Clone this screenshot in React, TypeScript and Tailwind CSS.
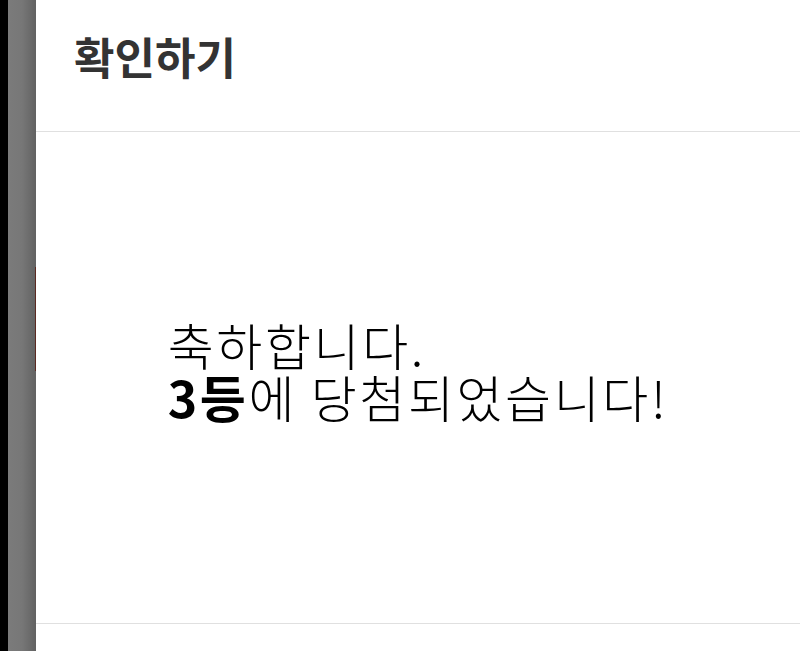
export default function App() {
  return (
    <div className="flex h-[651px] w-[800px] overflow-hidden bg-white font-['Noto_Sans_CJK_KR',sans-serif]">
      <div className="flex h-full w-[36px] shrink-0">
        <div className="h-full w-[8px] bg-black" />
        <div className="h-full flex-1 bg-gradient-to-r from-[#7b7b7b] via-[#777777] to-[#626262]" />
      </div>

      <div className="relative flex h-full flex-1 flex-col">
        <div className="absolute left-[-1px] top-[267px] h-[104px] w-[1px] bg-[#5b2a22]" />
        <header className="flex h-[132px] shrink-0 items-center border-b border-[#e0e0e0] pb-[20px] pl-[38px]">
          <h1 className="text-[44px] font-bold leading-none text-[#333333]">확인하기</h1>
        </header>

        <section className="flex h-[492px] shrink-0 items-center justify-center border-b border-[#e0e0e0] pb-[16px]">
          <p className="text-left text-[50px] font-light leading-[52px] tracking-[2.6px] text-black">
            축하합니다.
            <br />
            <span className="font-bold">3등</span>에 당첨되었습니다!
          </p>
        </section>
      </div>
    </div>
  );
}
